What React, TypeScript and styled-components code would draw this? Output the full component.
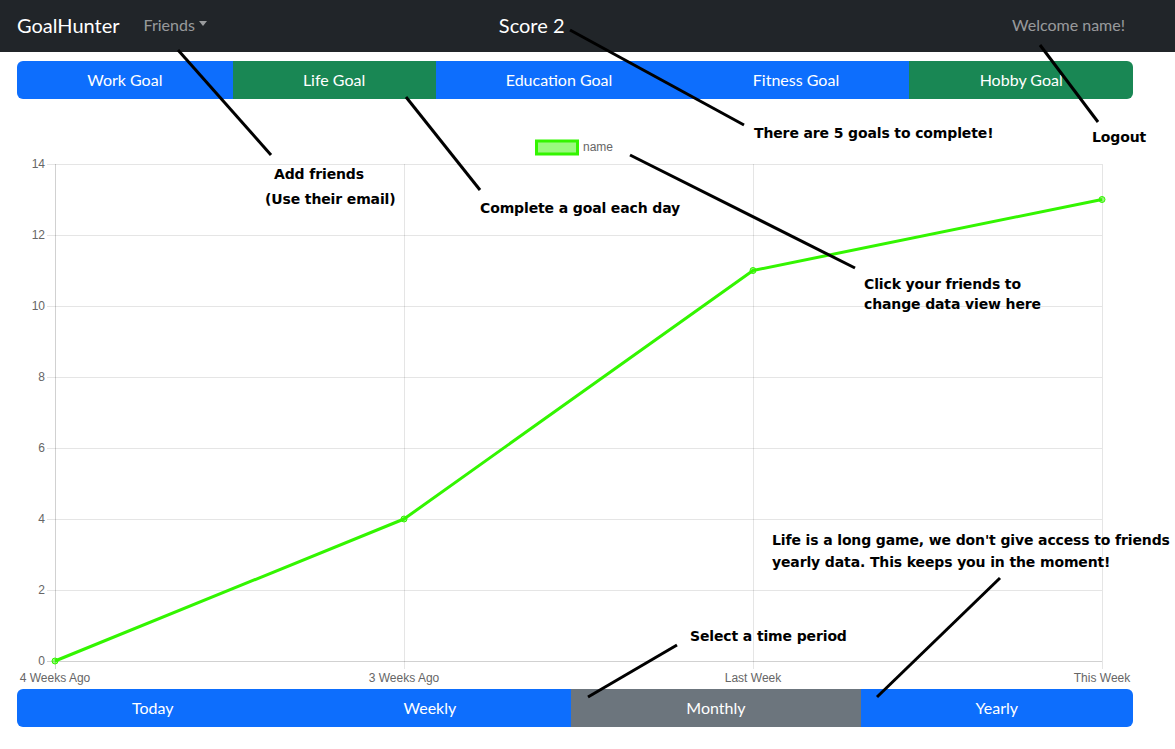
import { FC } from "react";
import styled, { createGlobalStyle } from "styled-components";

const GlobalStyle = createGlobalStyle`
  html, body {
    margin: 0;
    padding: 0;
    background: #ffffff;
  }
  body {
    font-family: Lato, "Liberation Sans", sans-serif;
    color: #212529;
  }
`;

const Page = styled.div`
  position: relative;
  width: 1175px;
  min-height: 749px;
  overflow: hidden;
`;

const NavBar = styled.nav`
  display: flex;
  align-items: center;
  height: 52px;
  box-sizing: border-box;
  padding: 0 50px 3px 17px;
  background: #212529;
`;

const Brand = styled.div`
  font-size: 20px;
  color: #ffffff;
  margin-right: 16px;
`;

const NavLink = styled.div`
  display: flex;
  align-items: center;
  padding: 8px;
  font-size: 16px;
  color: rgba(255, 255, 255, 0.55);
`;

const Caret = styled.span`
  display: inline-block;
  margin-left: 4px;
  margin-top: -2px;
  border-top: 5px solid rgba(255, 255, 255, 0.55);
  border-left: 4.5px solid transparent;
  border-right: 4.5px solid transparent;
`;

const Score = styled.div`
  margin-left: 284px;
  font-size: 20px;
  color: #ffffff;
`;

const Welcome = styled.div`
  margin-left: auto;
  font-size: 16px;
  color: rgba(255, 255, 255, 0.55);
`;

const Main = styled.main`
  display: flex;
  flex-direction: column;
  padding: 9px 42px 0 17px;
`;

const ButtonGroup = styled.div`
  display: flex;
  width: 1116px;
  border-radius: 6px;
  overflow: hidden;
`;

type Variant = "primary" | "success" | "secondary";

const colours: Record<Variant, string> = {
  primary: "#0d6efd",
  success: "#198754",
  secondary: "#6c757d",
};

const GroupButton = styled.button<{ $variant: Variant }>`
  flex: 1 1 auto;
  height: 38px;
  padding: 6px 12px;
  border: none;
  background: ${(p) => colours[p.$variant]};
  color: #ffffff;
  font-family: Lato, "Liberation Sans", sans-serif;
  font-size: 16px;
  line-height: 24px;
  cursor: pointer;
`;

const ChartSvg = styled.svg`
  display: block;
  width: 1116px;
  height: 590px;
  font-family: "Liberation Sans", Arial, sans-serif;
`;

const Overlay = styled.svg`
  position: absolute;
  left: 0;
  top: 0;
  width: 1175px;
  height: 749px;
  pointer-events: none;
`;

const Note = styled.div<{ $left: number; $top: number; $lh?: number }>`
  position: absolute;
  left: ${(p) => p.$left}px;
  top: ${(p) => p.$top}px;
  font-family: "DejaVu Sans", Verdana, sans-serif;
  font-weight: 700;
  font-size: 14px;
  letter-spacing: -0.13px;
  line-height: ${(p) => p.$lh ?? 18}px;
  color: #000000;
  white-space: nowrap;
`;

const goals: { label: string; variant: Variant }[] = [
  { label: "Work Goal", variant: "primary" },
  { label: "Life Goal", variant: "success" },
  { label: "Education Goal", variant: "primary" },
  { label: "Fitness Goal", variant: "primary" },
  { label: "Hobby Goal", variant: "success" },
];

const periods: { label: string; variant: Variant }[] = [
  { label: "Today", variant: "primary" },
  { label: "Weekly", variant: "primary" },
  { label: "Monthly", variant: "secondary" },
  { label: "Yearly", variant: "primary" },
];

const labels = ["4 Weeks Ago", "3 Weeks Ago", "Last Week", "This Week"];
const values = [0, 4, 11, 13];

const LEFT = 55;
const RIGHT = 1102;
const TOP = 163;
const BOTTOM = 660;
const MAX = 14;
const GREEN = "#33f500";
const GREEN_FILL = "rgba(51, 245, 0, 0.5)";

const xAt = (i: number) => LEFT + (i * (RIGHT - LEFT)) / (labels.length - 1);
const yAt = (v: number) => BOTTOM - (v / MAX) * (BOTTOM - TOP);

const Chart: FC = () => {
  const ticks = [0, 2, 4, 6, 8, 10, 12, 14];
  const points = values.map((v, i) => `${xAt(i)},${yAt(v)}`).join(" ");
  return (
    <ChartSvg viewBox="17 98 1116 590">
      <rect x={536.5} y={140} width={41} height={13} fill={GREEN_FILL} stroke={GREEN} strokeWidth={3} />
      <text x={583} y={150} fontSize={12} fill="#666">
        name
      </text>
      {ticks.map((t) => (
        <g key={t}>
          <line
            x1={47}
            x2={RIGHT}
            y1={yAt(t) + 0.5}
            y2={yAt(t) + 0.5}
            stroke={t === 0 ? "rgba(0,0,0,0.18)" : "rgba(0,0,0,0.1)"}
          />
          <text x={45} y={yAt(t) + 4} fontSize={12} fill="#666" textAnchor="end">
            {t}
          </text>
        </g>
      ))}
      {labels.map((l, i) => (
        <g key={l}>
          <line
            x1={xAt(i) + 0.5}
            x2={xAt(i) + 0.5}
            y1={TOP}
            y2={668}
            stroke={i === 0 ? "rgba(0,0,0,0.18)" : "rgba(0,0,0,0.1)"}
          />
          <text x={xAt(i)} y={681} fontSize={12} fill="#666" textAnchor="middle">
            {l}
          </text>
        </g>
      ))}
      <polyline points={points} fill="none" stroke={GREEN} strokeWidth={3} strokeLinejoin="round" />
      {values.map((v, i) => (
        <circle key={i} cx={xAt(i)} cy={yAt(v)} r={3} fill={GREEN_FILL} stroke={GREEN} strokeWidth={1} />
      ))}
    </ChartSvg>
  );
};

const arrows: [number, number, number, number][] = [
  [178, 50, 271, 155],
  [406, 97, 480, 190],
  [570, 30, 744, 125],
  [1040, 45, 1098, 122],
  [630, 155, 855, 268],
  [1000, 578, 877, 697],
  [677, 645, 588, 697],
];

const App: FC = () => {
  return (
    <Page>
      <GlobalStyle />
      <NavBar>
        <Brand>GoalHunter</Brand>
        <NavLink>
          Friends
          <Caret />
        </NavLink>
        <Score>Score 2</Score>
        <Welcome>Welcome name!</Welcome>
      </NavBar>
      <Main>
        <ButtonGroup>
          {goals.map((g) => (
            <GroupButton key={g.label} $variant={g.variant}>
              {g.label}
            </GroupButton>
          ))}
        </ButtonGroup>
        <Chart />
        <ButtonGroup>
          {periods.map((p) => (
            <GroupButton key={p.label} $variant={p.variant}>
              {p.label}
            </GroupButton>
          ))}
        </ButtonGroup>
      </Main>

      <Overlay viewBox="0 0 1175 749">
        {arrows.map(([x1, y1, x2, y2], i) => (
          <line key={i} x1={x1} y1={y1} x2={x2} y2={y2} stroke="#000" strokeWidth={3} />
        ))}
      </Overlay>
      <Note $left={274} $top={165}>Add friends</Note>
      <Note $left={265} $top={190}>(Use their email)</Note>
      <Note $left={480} $top={199}>Complete a goal each day</Note>
      <Note $left={754} $top={124}>There are 5 goals to complete!</Note>
      <Note $left={1092} $top={128}>Logout</Note>
      <Note $left={864} $top={274} $lh={20}>
        Click your friends to
        <br />
        change data view here
      </Note>
      <Note $left={772} $top={529} $lh={22}>
        Life is a long game, we don't give access to friends
        <br />
        yearly data. This keeps you in the moment!
      </Note>
      <Note $left={690} $top={627}>Select a time period</Note>
    </Page>
  );
};

export default App;
